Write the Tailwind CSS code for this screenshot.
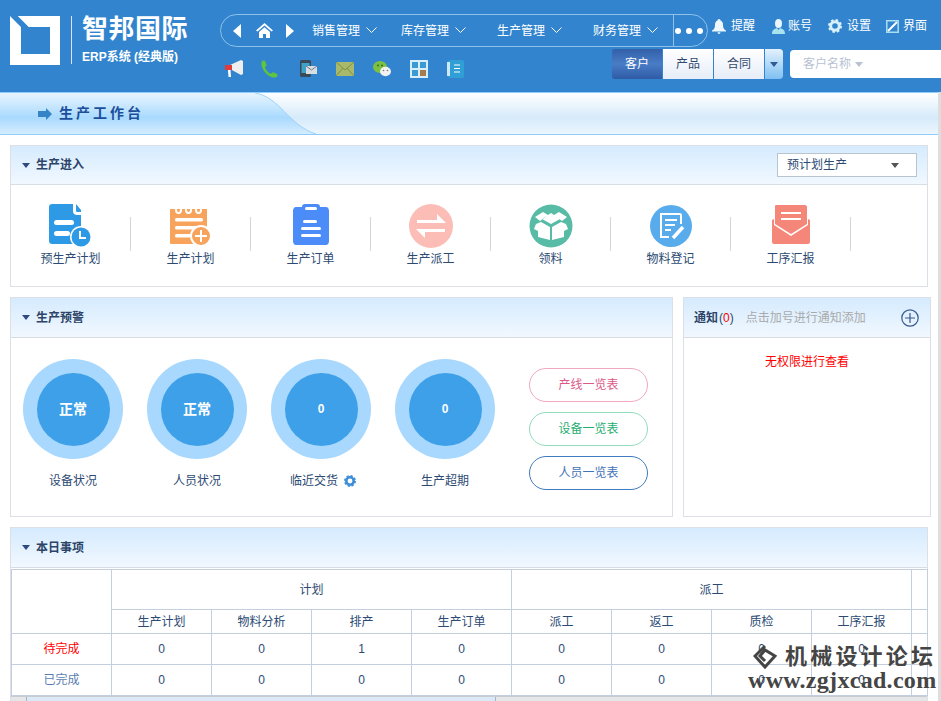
<!DOCTYPE html>
<html lang="zh">
<head>
    <meta charset="UTF-8">
    <title>生产工作台</title>
    <script src="https://cdn.jsdelivr.net/npm/@tailwindcss/browser@4"></script>
</head>
<body class="bg-white">
<div class="relative w-[941px] h-[701px] overflow-hidden bg-white text-[12px] text-[#2c4a72] font-['Liberation_Sans','Noto_Sans_CJK_SC',sans-serif]">

    <!-- top header -->
    <header class="flex h-[92px] bg-[#3184cd] text-white">
        <div class="flex w-[220px] shrink-0 pl-[10px] pt-[16px]">
            <svg width="50" height="49" viewBox="0 0 50 49"><path fill="#fff" d="M0 11 11 11 0 0ZM8 0H50V49H0V11H11V38H40V11H19Z" fill-rule="evenodd"/><path fill="#fff" d="M8 0 19 11H40V38H11V11L0 11V49H50V0Z" fill-rule="evenodd"/></svg>
            <div class="ml-[11px] w-[1px] h-[48px] bg-white/80"></div>
            <div class="ml-[10px] flex flex-col">
                <div class="text-[26px] leading-[26px] font-bold tracking-[0.5px] whitespace-nowrap">智邦国际</div>
                <div class="mt-[7px] text-[12px] leading-[16px] font-bold whitespace-nowrap">ERP系统 (经典版)</div>
            </div>
        </div>
        <div class="flex-1 flex flex-col pt-[14px]">
            <div class="flex items-start">
                <nav class="flex items-center w-[488px] h-[33px] rounded-full border border-[#8fc1ea]">
                    <svg class="ml-[12px]" width="8" height="14" viewBox="0 0 8 14"><path fill="#fff" d="M8 0V14L0 7Z"/></svg>
                    <svg class="ml-[15px]" width="17" height="15" viewBox="0 0 17 15"><path fill="#fff" d="M8.500 0 17 7.500 15.500 8.500 8.500 2.500 1.500 8.500 0 7.500ZM3 9 8.500 4.300 14 9V15H10V11H7V15H3Z"/></svg>
                    <svg class="ml-[13px]" width="8" height="14" viewBox="0 0 8 14"><path fill="#fff" d="M0 0V14L8 7Z"/></svg>
                    <span class="ml-[18px] whitespace-nowrap">销售管理</span>
                    <svg class="ml-[6px]" width="11" height="7" viewBox="0 0 11 7"><path fill="none" stroke="#fff" d="M.5 .5 5.500 5.500 10.500 .5"/></svg>
                    <span class="ml-[24px] whitespace-nowrap">库存管理</span>
                    <svg class="ml-[6px]" width="11" height="7" viewBox="0 0 11 7"><path fill="none" stroke="#fff" d="M.5 .5 5.500 5.500 10.500 .5"/></svg>
                    <span class="ml-[31px] whitespace-nowrap">生产管理</span>
                    <svg class="ml-[6px]" width="11" height="7" viewBox="0 0 11 7"><path fill="none" stroke="#fff" d="M.5 .5 5.500 5.500 10.500 .5"/></svg>
                    <span class="ml-[31px] whitespace-nowrap">财务管理</span>
                    <svg class="ml-[6px]" width="11" height="7" viewBox="0 0 11 7"><path fill="none" stroke="#fff" d="M.5 .5 5.500 5.500 10.500 .5"/></svg>
                    <div class="ml-[15px] flex flex-1 h-full items-center justify-center gap-[5px] border-l border-[#8fc1ea] pr-[3px]">
                        <span class="w-[6px] h-[6px] rounded-full bg-white"></span>
                        <span class="w-[6px] h-[6px] rounded-full bg-white"></span>
                        <span class="w-[6px] h-[6px] rounded-full bg-white"></span>
                    </div>
                </nav>
                <div class="flex items-center h-[24px] ml-[4px] mt-0">
                    <svg width="14" height="15" viewBox="0 0 14 15"><path fill="#eef7ff" d="M7 0C8 0 8.500 .8 8.500 1.500 10.500 2.300 11 4 11 6 11 9 12 10.500 14 11.500V12.500H0V11.500C2 10.500 3 9 3 6 3 4 3.500 2.300 5.500 1.500 5.500 .8 6 0 7 0ZM5.500 13.300H8.500C8.300 14.400 7.800 15 7 15S5.700 14.400 5.500 13.300Z"/></svg>
                    <span class="ml-[5px] whitespace-nowrap">提醒</span>
                    <svg class="ml-[17px]" width="13" height="15" viewBox="0 0 13 15"><ellipse cx="6.500" cy="4.500" rx="3.500" ry="4.500" fill="#eaf6ff"/><path fill="#a9e3ee" d="M0 15C0 11 2 10 5 9L6.500 11 8 9C11 10 13 11 13 15Z"/></svg>
                    <span class="ml-[3px] whitespace-nowrap">账号</span>
                    <svg class="ml-[16px]" width="14" height="14" viewBox="0 0 14 14"><circle cx="7" cy="7" r="4.300" fill="none" stroke="#d8f0fb" stroke-width="3"/><circle cx="7" cy="7" r="6" fill="none" stroke="#d8f0fb" stroke-width="2" stroke-dasharray="2.500 2.200"/></svg>
                    <span class="ml-[5px] whitespace-nowrap">设置</span>
                    <svg class="ml-[15px]" width="13" height="13" viewBox="0 0 13 13"><path fill="none" stroke="#a9dff0" stroke-width="1.500" d="M.8 12.200V.8H12.200V12.200Z"/><path stroke="#fff" stroke-width="2" d="M2 11 11 2"/></svg>
                    <span class="ml-[4px] whitespace-nowrap">界面</span>
                </div>
            </div>
            <div class="flex items-center mt-[2px] h-[30px]">
                <div class="flex items-center gap-[19px] w-[392px] pl-[5px] pt-[9px]">
                    <svg width="18" height="17" viewBox="0 0 18 17"><path fill="#eee" d="M5 5 16 0 18 1V14L16 15 5 9Z"/><path fill="#e03a3a" d="M0 5H7V10H0Z"/><path fill="#fff" d="M3 10H5.500L6 17H3.500Z"/></svg>
                    <svg class="-ml-[1px]" width="17" height="18" viewBox="0 0 17 18"><path fill="#5fc43e" d="M1 1C3 0 4 .5 4.500 2L5.500 5C5.700 6 5 6.500 4 7 4.500 9.500 7 12.500 10 14 10.500 13 11.500 12 12.500 12.300L16 14C17 15 16.500 17 14 17.500 7 18.500 -2 7 1 1Z"/></svg>
                    <svg class="ml-[3px]" width="17" height="17" viewBox="0 0 17 17"><rect x="0" y="0" width="11" height="17" rx="1.500" fill="#3a4a58"/><rect x="1.500" y="3" width="8" height="10" fill="#3fa0c8"/><rect x="6" y="6" width="11" height="8" fill="#d8dde2"/><path fill="none" stroke="#778" d="M6 6 11.500 10 17 6"/></svg>
                    <svg width="18" height="14" viewBox="0 0 18 14"><rect width="18" height="14" fill="#a9b96a"/><path fill="none" stroke="#7f8f48" d="M0 0 9 8 18 0M0 14 7 6M18 14 11 6"/></svg>
                    <svg width="18" height="16" viewBox="0 0 18 16"><ellipse cx="7" cy="6" rx="7" ry="6" fill="#7dc142"/><ellipse cx="12.500" cy="10.500" rx="5.500" ry="4.700" fill="#f2f2f2"/><circle cx="5" cy="4.500" r="1" fill="#3c6b1d"/><circle cx="9" cy="4.500" r="1" fill="#3c6b1d"/><circle cx="10.500" cy="9.500" r=".8" fill="#777"/><circle cx="14.500" cy="9.500" r=".8" fill="#777"/></svg>
                    <svg width="18" height="18" viewBox="0 0 18 18"><rect width="18" height="18" fill="#d6eef9"/><rect x="2" y="2" width="6" height="6" fill="#3b9ad1"/><rect x="10" y="2" width="6" height="6" fill="#3b9ad1"/><rect x="2" y="10" width="6" height="6" fill="#3b9ad1"/><rect x="10" y="10" width="6" height="6" fill="#a67c4e"/></svg>
                    <svg width="17" height="18" viewBox="0 0 17 18"><rect x="1" y="0" width="16" height="18" rx="2" fill="#2f9fd6"/><rect x="0" y="2" width="3" height="14" fill="#cfe8f5"/><path stroke="#fff" d="M7 5H13M7 8.500H13M7 12H13"/></svg>
                </div>
                <div class="flex w-[171px] h-[30px] rounded-[3px] overflow-hidden">
                    <div class="flex items-center justify-center w-[50px] text-white bg-gradient-to-b from-[#3260a9] via-[#4a7cc6] to-[#2f5ba6]">客户</div>
                    <div class="flex items-center justify-center w-[50px] ml-[1px] text-[#33496b] bg-gradient-to-b from-white to-[#e6edf8]">产品</div>
                    <div class="flex items-center justify-center w-[50px] ml-[1px] text-[#33496b] bg-gradient-to-b from-white to-[#e6edf8]">合同</div>
                    <div class="flex items-center justify-center flex-1 ml-[1px] rounded-r-[3px] bg-gradient-to-b from-[#e3f1fd] to-[#7fc0f2]">
                        <svg width="8" height="5" viewBox="0 0 8 5"><path fill="#2f5b96" d="M0 0H8L4 5Z"/></svg>
                    </div>
                </div>
                <div class="flex items-center flex-1 ml-[7px] h-[28px] rounded-l-[4px] bg-white pl-[13px] text-[#b8c2d2]">
                    <span class="whitespace-nowrap">客户名称</span>
                    <svg class="ml-[4px]" width="8" height="5" viewBox="0 0 8 5"><path fill="#b8c2d2" d="M0 0H8L4 5Z"/></svg>
                </div>
            </div>
        </div>
    </header>

    <!-- page title strip -->
    <div class="relative h-[43px] border-y border-[#8fcbfb] bg-gradient-to-b from-white via-[#d6eafa] via-60% to-[#ecf6fe]">
        <svg class="absolute left-0 top-0" width="320" height="41" viewBox="0 0 320 41">
            <defs><linearGradient id="titleBg" x1="0" y1="0" x2="0" y2="1"><stop offset="0" stop-color="#e9f5ff"/><stop offset=".6" stop-color="#a9dafe"/><stop offset="1" stop-color="#d5ecfe"/></linearGradient></defs>
            <path fill="url(#titleBg)" d="M0 0H255C280 4 288 32 316 41H0Z"/>
            <path fill="none" stroke="#9fd3fa" d="M255 0C280 4 288 32 316 41"/>
        </svg>
        <div class="relative flex items-center h-full pl-[38px]">
            <svg width="14" height="12" viewBox="0 0 14 12"><path fill="#3484c6" d="M0 3H8V0L14 6 8 12V9H0Z"/></svg>
            <span class="ml-[7px] text-[14px] font-bold tracking-[3px] text-[#1b4f9c] whitespace-nowrap">生产工作台</span>
        </div>
    </div>

    <!-- 生产进入 -->
    <section class="mx-[10px] mt-[10px] w-[918px] h-[142px] border border-[#dcdfe4]">
        <div class="flex items-center h-[39px] border-b border-[#d8dde4] bg-gradient-to-b from-[#d5ebfe] to-[#f1f8ff] pl-[11px] pr-[10px]">
            <svg width="8" height="5" viewBox="0 0 8 5"><path fill="#2f4a80" d="M0 0H8L4 5Z"/></svg>
            <span class="ml-[6px] font-bold text-[#2c4468]">生产进入</span>
            <div class="flex items-center justify-between ml-auto w-[140px] h-[24px] border border-[#b8c4d0] bg-white pl-[9px] pr-[17px]">
                <span>预计划生产</span>
                <svg width="8" height="5" viewBox="0 0 8 5"><path fill="#555" d="M0 0H8L4 5Z"/></svg>
            </div>
        </div>
        <div class="flex pt-[19px]">
            <div class="flex flex-col items-center w-[119px]">
                <svg width="44" height="44" viewBox="0 0 44 44"><path fill="#2e9ae6" d="M3 0H24V7C24 10 26 11 29 11H32V40H3C1.500 40 0 39 0 37V3C0 1 1.500 0 3 0Z"/><path fill="#2e9ae6" d="M27 0 32 6V8H28C27 8 27 7 27 6Z"/><rect x="5" y="16" width="20" height="5" rx="2.500" fill="#fff"/><rect x="5" y="27" width="16" height="5" rx="2.500" fill="#fff"/><circle cx="32" cy="33" r="11" fill="#fff"/><circle cx="32" cy="33" r="9.500" fill="#2e9ae6"/><path fill="none" stroke="#fff" stroke-width="2" d="M31 27V34H37"/></svg>
                <span class="mt-[2px] leading-[18px] whitespace-nowrap">预生产计划</span>
            </div>
            <div class="w-[1px] h-[34px] mt-[13px] bg-[#d5d5d5]"></div>
            <div class="flex flex-col items-center w-[119px]">
                <svg width="44" height="44" viewBox="0 0 44 44"><path fill="#f7a35c" d="M2 5H38V40H2C1 40 1 39 1 38V6C1 5 1 5 2 5Z"/><path fill="none" stroke="#fff" stroke-width="2" d="M7 0V6C7 10 12 10 12 6V0M17 0V6C17 10 22 10 22 6V0M27 0V6C27 10 32 10 32 6V0"/><rect x="6" y="14" width="28" height="3.500" rx="1.500" fill="#fff"/><rect x="6" y="22" width="24" height="3.500" rx="1.500" fill="#fff"/><rect x="6" y="30" width="16" height="3.500" rx="1.500" fill="#fff"/><circle cx="32" cy="32" r="10" fill="#f7a35c" stroke="#fff" stroke-width="2"/><path stroke="#fff" stroke-width="2" d="M26 32H38M32 26V38"/></svg>
                <span class="mt-[2px] leading-[18px] whitespace-nowrap">生产计划</span>
            </div>
            <div class="w-[1px] h-[34px] mt-[13px] bg-[#d5d5d5]"></div>
            <div class="flex flex-col items-center w-[119px]">
                <svg width="44" height="44" viewBox="0 0 44 44"><path fill="#4c8cf8" d="M7 3H13C13 1 14 0 16 0H28C30 0 31 1 31 3H37C39 3 40 5 40 7V37C40 39 39 41 37 41H7C5 41 4 39 4 37V7C4 5 5 3 7 3Z"/><rect x="16" y="3" width="12" height="3" rx="1.500" fill="#fff"/><rect x="14" y="16" width="14" height="3" rx="1.500" fill="#fff"/><rect x="12" y="23" width="20" height="3" rx="1.500" fill="#fff"/><rect x="12" y="30" width="20" height="3" rx="1.500" fill="#fff"/></svg>
                <span class="mt-[2px] leading-[18px] whitespace-nowrap">生产订单</span>
            </div>
            <div class="w-[1px] h-[34px] mt-[13px] bg-[#d5d5d5]"></div>
            <div class="flex flex-col items-center w-[119px]">
                <svg width="44" height="44" viewBox="0 0 44 44"><circle cx="22" cy="22" r="22" fill="#fbbdb6"/><path fill="#fff" d="M8 19V16H28V10L37 19ZM36 25V28H16V34L7 25Z"/></svg>
                <span class="mt-[2px] leading-[18px] whitespace-nowrap">生产派工</span>
            </div>
            <div class="w-[1px] h-[34px] mt-[13px] bg-[#d5d5d5]"></div>
            <div class="flex flex-col items-center w-[119px]">
                <svg width="44" height="44" viewBox="0 0 44 44"><circle cx="22" cy="22" r="21.500" fill="#58bba5"/><path fill="#fff" d="M22 9 13 15 22 20 31 15ZM6 13 14 8 19 11 11 17ZM38 13 30 8 25 11 33 17ZM7 20 12 18 21 23 21 36 9 33V27L5 25ZM37 20 32 18 23 23 23 36 35 33V27L39 25Z"/></svg>
                <span class="mt-[2px] leading-[18px] whitespace-nowrap">领料</span>
            </div>
            <div class="w-[1px] h-[34px] mt-[13px] bg-[#d5d5d5]"></div>
            <div class="flex flex-col items-center w-[119px]">
                <svg width="44" height="44" viewBox="0 0 44 44"><circle cx="22" cy="22" r="21" fill="#59acec"/><path fill="none" stroke="#fff" stroke-width="2" d="M32 20V11C32 10 31 10 30 10H12V33H20"/><path stroke="#fff" stroke-width="2" d="M16 16H28M16 21H26M16 26H22"/><path stroke="#fff" stroke-width="3.500" d="M24 34 34 23"/></svg>
                <span class="mt-[2px] leading-[18px] whitespace-nowrap">物料登记</span>
            </div>
            <div class="w-[1px] h-[34px] mt-[13px] bg-[#d5d5d5]"></div>
            <div class="flex flex-col items-center w-[119px]">
                <svg width="44" height="44" viewBox="0 0 44 44"><path fill="#f5867a" d="M7 1H36C37 1 38 2 38 3V20L22 30 6 20V3C6 2 6 1 7 1Z"/><path fill="#f5867a" d="M3 16 5 15V21L22 32 39 21V15L41 16V38C41 39 40 40 39 40H5C4 40 3 39 3 38Z"/><path stroke="#fff" stroke-width="2" d="M12 9H32M12 15H32"/></svg>
                <span class="mt-[2px] leading-[18px] whitespace-nowrap">工序汇报</span>
            </div>
            <div class="w-[1px] h-[34px] mt-[13px] bg-[#d5d5d5]"></div>
        </div>
    </section>

    <div class="flex mx-[10px] mt-[10px] gap-[10px]">
        <!-- 生产预警 -->
        <section class="w-[663px] h-[220px] border border-[#dcdfe4]">
            <div class="flex items-center h-[40px] border-b border-[#d8dde4] bg-gradient-to-b from-[#d5ebfe] to-[#f1f8ff] pl-[11px]">
                <svg width="8" height="5" viewBox="0 0 8 5"><path fill="#2f4a80" d="M0 0H8L4 5Z"/></svg>
                <span class="ml-[6px] font-bold text-[#2c4468]">生产预警</span>
            </div>
            <div class="flex pl-[12px] pt-[21px]">
                <div class="flex flex-col items-center w-[100px] mr-[24px]">
                    <div class="flex items-center justify-center w-[100px] h-[100px] rounded-full bg-[#a8d8fd]">
                        <div class="flex items-center justify-center w-[73px] h-[73px] rounded-full bg-[#3da0e8] text-white text-[14px] font-bold">正常</div>
                    </div>
                    <span class="mt-[13px] leading-[18px]">设备状况</span>
                </div>
                <div class="flex flex-col items-center w-[100px] mr-[24px]">
                    <div class="flex items-center justify-center w-[100px] h-[100px] rounded-full bg-[#a8d8fd]">
                        <div class="flex items-center justify-center w-[73px] h-[73px] rounded-full bg-[#3da0e8] text-white text-[14px] font-bold">正常</div>
                    </div>
                    <span class="mt-[13px] leading-[18px]">人员状况</span>
                </div>
                <div class="flex flex-col items-center w-[100px] mr-[24px]">
                    <div class="flex items-center justify-center w-[100px] h-[100px] rounded-full bg-[#a8d8fd]">
                        <div class="flex items-center justify-center w-[73px] h-[73px] rounded-full bg-[#3da0e8] text-white font-bold">0</div>
                    </div>
                    <div class="flex items-center mt-[13px] h-[18px] pl-[4px]">
                        <span class="whitespace-nowrap">临近交货</span>
                        <svg class="ml-[6px]" width="12" height="12" viewBox="0 0 12 12"><circle cx="6" cy="6" r="3.700" fill="none" stroke="#3f8fd8" stroke-width="2.600"/><circle cx="6" cy="6" r="5" fill="none" stroke="#3f8fd8" stroke-width="2" stroke-dasharray="2.200 1.700"/></svg>
                    </div>
                </div>
                <div class="flex flex-col items-center w-[100px]">
                    <div class="flex items-center justify-center w-[100px] h-[100px] rounded-full bg-[#a8d8fd]">
                        <div class="flex items-center justify-center w-[73px] h-[73px] rounded-full bg-[#3da0e8] text-white font-bold">0</div>
                    </div>
                    <span class="mt-[13px] leading-[18px]">生产超期</span>
                </div>
                <div class="flex flex-col ml-[34px] pt-[9px] gap-[10px]">
                    <a class="flex items-center justify-center w-[119px] h-[34px] rounded-[17px] border border-[#f0a8c0] text-[#dc5a88]">产线一览表</a>
                    <a class="flex items-center justify-center w-[119px] h-[34px] rounded-[17px] border border-[#93dcbb] text-[#1fae72]">设备一览表</a>
                    <a class="flex items-center justify-center w-[119px] h-[34px] rounded-[17px] border border-[#3f7bc0] text-[#3f74b8]">人员一览表</a>
                </div>
            </div>
        </section>

        <!-- 通知 -->
        <section class="flex-1 h-[220px] border border-[#dcdfe4]">
            <div class="flex items-center h-[40px] border-b border-[#d8dde4] bg-gradient-to-b from-[#d5ebfe] to-[#f1f8ff] pl-[10px] pr-[11px]">
                <span class="font-bold text-[#2c4468]">通知</span>
                <span class="ml-[1px]">(<span class="text-[#f00]">0</span>)</span>
                <span class="ml-[12px] text-[#aaa] whitespace-nowrap">点击加号进行通知添加</span>
                <svg class="ml-auto" width="18" height="18" viewBox="0 0 18 18"><circle cx="9" cy="9" r="8.200" fill="none" stroke="#36598f" stroke-width="1.200"/><path stroke="#36598f" stroke-width="1.200" d="M4 9H14M9 4V14"/></svg>
            </div>
            <div class="pt-[15px] text-center leading-[18px] text-[#f00]">无权限进行查看</div>
        </section>
    </div>

    <!-- 本日事项 -->
    <section class="mx-[10px] mt-[10px] w-[918px] h-[175px] border-x border-t border-[#dcdfe4]">
        <div class="flex items-center h-[40px] border-b border-[#d8dde4] bg-gradient-to-b from-[#d5ebfe] to-[#f1f8ff] pl-[11px]">
            <svg width="8" height="5" viewBox="0 0 8 5"><path fill="#2f4a80" d="M0 0H8L4 5Z"/></svg>
            <span class="ml-[6px] font-bold text-[#2c4468]">本日事项</span>
        </div>
        <table class="mt-px table-fixed w-[916px] border-collapse text-center [&_td]:border [&_td]:border-[#c3cfdf] [&_th]:border [&_th]:border-[#c3cfdf] [&_th]:font-normal">
            <colgroup>
                <col class="w-[100px]"><col class="w-[100px]"><col class="w-[100px]"><col class="w-[100px]"><col class="w-[100px]"><col class="w-[100px]"><col class="w-[100px]"><col class="w-[100px]"><col class="w-[100px]"><col class="w-[16px]">
            </colgroup>
            <tr class="h-[40px]">
                <th rowspan="2"></th>
                <th colspan="4">计划</th>
                <th colspan="4">派工</th>
                <th></th>
            </tr>
            <tr class="h-[24px]">
                <th>生产计划</th><th>物料分析</th><th>排产</th><th>生产订单</th><th>派工</th><th>返工</th><th>质检</th><th>工序汇报</th><th></th>
            </tr>
            <tr class="h-[31px]">
                <td class="text-[#f00]">待完成</td><td>0</td><td>0</td><td>1</td><td>0</td><td>0</td><td>0</td><td>0</td><td>0</td><td></td>
            </tr>
            <tr class="h-[31px]">
                <td class="text-[#5b7db0]">已完成</td><td>0</td><td>0</td><td>0</td><td>0</td><td>0</td><td>0</td><td>0</td><td>0</td><td></td>
            </tr>
        </table>
        <div class="flex h-[6px] bg-[#e4e6e8] border-t border-[#c8ccd0]">
            <div class="ml-[15px] w-[470px] h-full border-x border-[#9fb6d0] bg-[#dbe9f6]"></div>
        </div>
    </section>

    <!-- page scrollbar edge -->
    <div class="absolute right-0 top-[92px] bottom-0 w-[3px] bg-[#dedede]"></div>

    <!-- site watermark -->
    <div class="absolute left-[748px] top-[644px] text-[#454545]">
        <div class="flex items-center pl-[5px]">
            <svg width="24" height="26" viewBox="0 0 24 26"><path fill="none" stroke="#454545" stroke-width="3" d="M12 2 2 12 12 23 22 12 12 6 7 12 12 17"/></svg>
            <span class="ml-[8px] text-[22px] leading-[26px] font-bold tracking-[3.200px] whitespace-nowrap">机械设计论坛</span>
        </div>
        <div class="-mt-[3px] font-['Liberation_Serif',serif] text-[24px] leading-[26px] font-bold tracking-[.3px] whitespace-nowrap">www.zgjxcad.com</div>
    </div>
</div>
</body>
</html>
